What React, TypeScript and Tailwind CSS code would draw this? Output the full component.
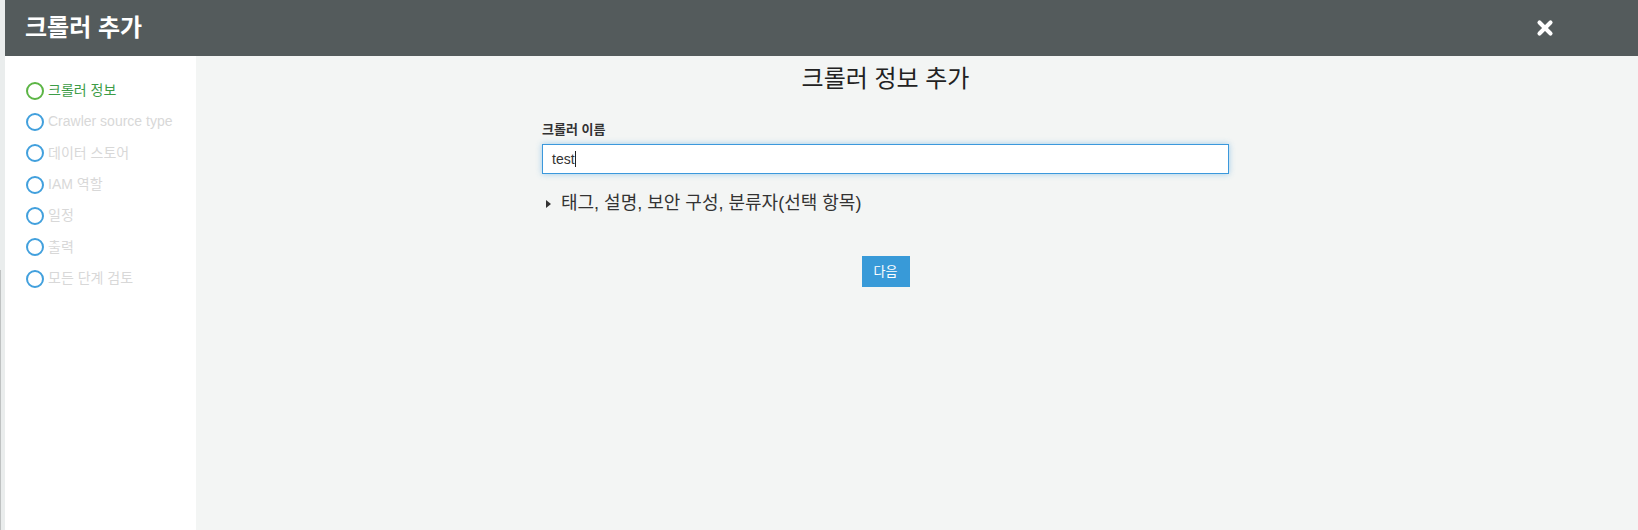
import { X } from "lucide-react";

const steps = [
  { label: "크롤러 정보", active: true },
  { label: "Crawler source type", active: false },
  { label: "데이터 스토어", active: false },
  { label: "IAM 역할", active: false },
  { label: "일정", active: false },
  { label: "출력", active: false },
  { label: "모든 단계 검토", active: false },
];

const font = { fontFamily: '"Liberation Sans", "Noto Sans CJK KR", sans-serif' };

export default function App() {
  return (
    <div className="flex h-[530px] w-full overflow-hidden bg-[#eaeded]" style={font}>
      {/* left edge strip */}
      <div className="flex w-[5px] flex-col">
        <div className="h-[270px]" />
        <div className="w-[1px] flex-1 bg-[#bfc2c2]" />
      </div>

      <div className="flex flex-1 flex-col">
        {/* header */}
        <div className="flex h-[56px] items-center justify-between bg-[#545b5c] pl-[20px] pr-[82px]">
          <h1 className="text-[24px] font-bold text-white">크롤러 추가</h1>
          <X className="h-[22px] w-[22px] text-white" strokeWidth={4.5} />
        </div>

        <div className="flex flex-1">
          {/* sidebar */}
          <nav className="w-[191px] bg-white pl-[21px] pt-[19px]">
            <ul className="flex flex-col">
              {steps.map((s) => (
                <li key={s.label} className="flex h-[31.33px] items-center gap-[4px]">
                  <span
                    className={
                      s.active
                        ? "h-[18px] w-[18px] rounded-full border-2 border-[#5cb545]"
                        : "h-[18px] w-[18px] rounded-full border-2 border-[#42a0dd]"
                    }
                  />
                  <span
                    className={
                      s.active ? "text-[14px] text-[#3d9c47]" : "text-[14px] text-[#d8d8d8]"
                    }
                  >
                    {s.label}
                  </span>
                </li>
              ))}
            </ul>
          </nav>

          {/* main */}
          <main className="flex flex-1 flex-col items-center bg-[#f3f5f4] pr-[63px] pt-[8px]">
            <h2 className="text-[24px] leading-[30px] text-[#222]">크롤러 정보 추가</h2>

            <div className="mt-[28px] w-[687px]">
              <label className="block text-[13px] font-bold leading-[16px] text-[#333]">
                크롤러 이름
              </label>
              <div className="mt-[6px] flex h-[30px] items-center border border-[#3b98dc] bg-white px-[9px] shadow-[0_0_6px_rgba(59,152,220,0.45)]">
                <span className="text-[14px] text-[#333]">test</span>
                <span className="h-[16px] w-[1px] bg-[#222]" />
              </div>

              <div className="mt-[16px] flex items-center gap-[10px] pl-[4px]">
                <span className="h-0 w-0 border-y-[4px] border-l-[5px] border-y-transparent border-l-[#333]" />
                <span className="text-[18px] text-[#333]">태그, 설명, 보안 구성, 분류자(선택 항목)</span>
              </div>
            </div>

            <button className="mt-[39px] h-[31px] w-[48px] bg-[#389ad8] text-[13px] text-white">
              다음
            </button>
          </main>
        </div>
      </div>
    </div>
  );
}
